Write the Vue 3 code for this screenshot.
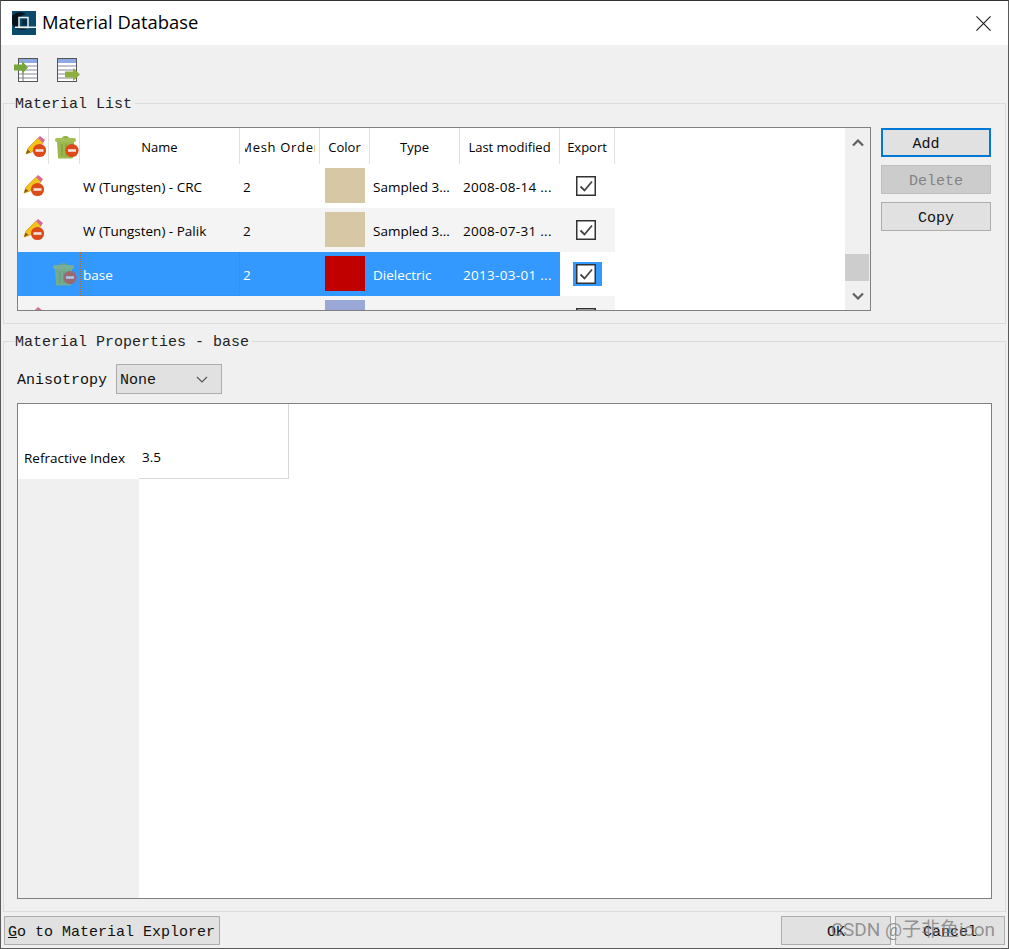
<template>
  <svg class="defs" aria-hidden="true">
    <symbol id="pencil" viewBox="0 0 22 22">
      <polygon points="1,18 3,12 13,2 18,7 7,16" fill="#f5c21a" stroke="#d99a14" stroke-width="0.7" />
      <polygon points="1,18 2.500,13.500 5.500,16" fill="#8a5a24" />
      <polygon points="13,2 15,0 20,4 18,7" fill="#d9679a" />
      <circle cx="14.5" cy="14.5" r="6.6" fill="#dc4a1a" />
      <rect x="10.5" y="13.2" width="8" height="2.6" fill="#f2e4dc" />
    </symbol>
    <symbol id="trash" viewBox="0 0 24 24">
      <ellipse cx="10.5" cy="3.5" rx="3.5" ry="2.5" fill="#8eab3e" />
      <rect x="0" y="3" width="21" height="4" rx="2" fill="#a4bf55" />
      <path d="M2 7H19L18 22.500Q18 23.500 17 23.500H4Q3 23.500 3 22.500Z" fill="#9cb84c" />
      <path d="M7 9V21M11 9V21" stroke="#86a23a" stroke-width="1.500" />
      <circle cx="17" cy="15.500" r="6.600" fill="#dc4a1a" />
      <rect x="13" y="14.200" width="8" height="2.600" fill="#f2e4dc" />
    </symbol>
  </svg>

  <div class="window">
    <header class="titlebar">
      <svg class="logo" viewBox="0 0 24 24" width="24" height="24">
        <rect width="24" height="24" fill="#0b4a6a" />
        <path d="M0 5C3 1 9 0 14 3C10 4 7 6 7 11C7 15 10 17 16 18C9 20 3 18 0 13Z" fill="#06141c" />
        <rect x="7" y="6.500" width="9" height="10" fill="#0b4a6a" stroke="#e8eef2" stroke-width="1.500" />
        <rect x="10" y="8.500" width="5" height="6" fill="#062c42" />
        <rect x="3" y="15.500" width="21" height="1.500" fill="#e8eef2" />
      </svg>
      <span class="title">Material Database</span>
      <svg class="close" viewBox="0 0 16 16" width="15" height="15">
        <path d="M0.500 0.500L15.500 15.500M15.500 0.500L0.500 15.500" stroke="#111" stroke-width="1.100" fill="none" />
      </svg>
    </header>

    <div class="toolbar">
      <svg viewBox="0 0 26 26" width="26" height="26">
        <rect x="4.500" y="0.500" width="19" height="23" fill="#fff" stroke="#555" />
        <rect x="5" y="1" width="18" height="4" fill="#8ea8e0" />
        <path d="M5 8H23M5 12H23M5 16H23M5 20H23" stroke="#c2c4cc" stroke-width="2" />
        <path d="M9 6V23" stroke="#777" />
        <path d="M0 6.500H8V3L14 9.500L8 16V12.500H0Z" fill="#76a53c" />
      </svg>
      <svg viewBox="0 0 26 26" width="26" height="26">
        <rect x="0.500" y="0.500" width="19" height="23" fill="#fff" stroke="#555" />
        <rect x="1" y="1" width="18" height="4" fill="#8ea8e0" />
        <path d="M1 8H19M1 12H19M1 16H19M1 20H19" stroke="#c2c4cc" stroke-width="2" />
        <path d="M8 13.500H16V10L23 16.500L16 23V19.500H8Z" fill="#8eaf3c" />
      </svg>
    </div>

    <fieldset class="group list-group">
      <legend>Material List</legend>
      <div class="list-body">
        <div class="mat-table">
          <div class="rows">
            <div class="row head">
              <div class="cell center"><svg class="ico head-pencil"><use href="#pencil" /></svg></div>
              <div class="cell center"><svg class="ico-t head-trash"><use href="#trash" /></svg></div>
              <div class="cell center">Name</div>
              <div class="cell center"><span class="clip"><span>Mesh Order</span></span></div>
              <div class="cell center">Color</div>
              <div class="cell center">Type</div>
              <div class="cell center">Last modified</div>
              <div class="cell center">Export</div>
            </div>
            <div
              v-for="(m, i) in materials"
              :key="i"
              class="row"
              :class="{ alt: m.alt, selected: m.selected }"
            >
              <div class="cell center tint"><svg v-if="m.readonly" class="ico"><use href="#pencil" /></svg></div>
              <div class="cell center tint"><svg v-if="!m.readonly" class="ico-t faded"><use href="#trash" /></svg></div>
              <div class="cell tint text" :class="{ focus: m.selected }">{{ m.name }}</div>
              <div class="cell tint text">{{ m.mesh }}</div>
              <div class="cell tint swatch-cell"><div class="swatch" :style="{ background: m.color }"></div></div>
              <div class="cell tint text">{{ m.type }}</div>
              <div class="cell tint text date">{{ m.date }}</div>
              <div class="cell center export">
                <div class="check-wrap">
                  <svg class="check" viewBox="0 0 20 20" width="20" height="20">
                    <rect x="0.750" y="0.750" width="18.500" height="18.500" fill="#fff" stroke="#333" stroke-width="1.500" />
                    <path d="M4.500 10.500L8.500 14.500L16 5.500" fill="none" stroke="#444" stroke-width="1.800" />
                  </svg>
                </div>
              </div>
            </div>
          </div>
          <div class="scrollbar">
            <div class="arrow up">
              <svg viewBox="0 0 12 8" width="12" height="8"><path d="M1 6.500L6 1.500L11 6.500" fill="none" stroke="#606060" stroke-width="2.200" /></svg>
            </div>
            <div class="track"><div class="thumb"></div></div>
            <div class="arrow down">
              <svg viewBox="0 0 12 8" width="12" height="8"><path d="M1 1.500L6 6.500L11 1.500" fill="none" stroke="#606060" stroke-width="2.200" /></svg>
            </div>
          </div>
        </div>
        <div class="side-btns">
          <button class="btn add">Add</button>
          <button class="btn disabled">Delete</button>
          <button class="btn">Copy</button>
        </div>
      </div>
    </fieldset>

    <fieldset class="group props-group">
      <legend>Material Properties - base</legend>
      <div class="aniso">
        <span class="mono-label">Anisotropy</span>
        <div class="combo">
          <span class="mono-label">None</span>
          <svg viewBox="0 0 12 7" width="12" height="7"><path d="M1 1L6 6L11 1" fill="none" stroke="#555" stroke-width="1.200" /></svg>
        </div>
      </div>
      <div class="prop-table">
        <div class="prop-labels"><div class="prop-label">Refractive Index</div></div>
        <div class="prop-value">3.5</div>
      </div>
    </fieldset>

    <footer class="bottom">
      <button class="btn explorer"><u>G</u>o to Material Explorer</button>
      <div class="bottom-right">
        <button class="btn wide">OK</button>
        <button class="btn wide">Cancel</button>
      </div>
    </footer>
    <div class="watermark">CSDN @子非鱼icon</div>
  </div>
</template>

<script setup>
const materials = [
  { name: 'W (Tungsten) - CRC', mesh: 2, color: '#d6c8a5', type: 'Sampled 3...', date: '2008-08-14 ...', readonly: true },
  { name: 'W (Tungsten) - Palik', mesh: 2, color: '#d6c8a5', type: 'Sampled 3...', date: '2008-07-31 ...', readonly: true, alt: true },
  { name: 'base', mesh: 2, color: '#c00000', type: 'Dielectric', date: '2013-03-01 ...', selected: true },
  // only the top of this row is visible, its text is below the fold
  { name: '', mesh: '', color: '#9aa8d8', type: '', date: '', readonly: true, alt: true }
]
</script>

<style>
html, body {
  margin: 0;
  background: #f0f0f0;
}
</style>

<style scoped>
.defs {
  position: absolute;
  width: 0;
  height: 0;
}
.window {
  position: relative;
  width: 1009px;
  height: 949px;
  box-sizing: border-box;
  background: #f0f0f0;
  border: 1px solid #5a5a5a;
  border-top-color: #333;
  display: flex;
  flex-direction: column;
  font-family: "Liberation Mono", monospace;
  font-size: 15px;
  color: #111;
}

.titlebar {
  height: 44px;
  flex: none;
  background: #fff;
  display: flex;
  align-items: center;
  padding: 0 17px 0 11px;
}
.logo {
  margin-right: 6px;
}
.title {
  font-family: "Open Sans", sans-serif;
  font-size: 18.4px;
  color: #000;
  margin-top: -4px;
}
.close {
  margin-left: auto;
}

.toolbar {
  height: 48px;
  flex: none;
  box-sizing: border-box;
  display: flex;
  gap: 17px;
  padding: 13px 0 0 13px;
}

.group {
  margin: 0 2px;
  padding: 0 13px;
  min-width: 0;
  border: 1px solid #dcdcdc;
  box-sizing: border-box;
}
.group legend {
  padding: 3px 3px 0 0;
  margin-left: -2px;
  line-height: 18px;
  color: #222;
}
.list-group {
  height: 231px;
  flex: none;
}
.props-group {
  flex: 1;
  margin-top: 7px;
}

.list-body {
  display: flex;
  align-items: flex-start;
  margin-top: 13px;
}
.mat-table {
  width: 854px;
  height: 184px;
  box-sizing: border-box;
  border: 1px solid #7e8084;
  background: #fff;
  display: flex;
  font-family: "Open Sans", sans-serif;
  font-size: 13px;
  color: #000;
}
.rows {
  flex: 1;
  overflow: hidden;
}
.row {
  display: grid;
  grid-template-columns: 31px 31px 160px 80px 50px 90px 100px 55px;
  width: 597px;
  height: 44px;
}
.row.head {
  height: 36px;
}
.cell {
  min-width: 0;
  overflow: hidden;
  white-space: nowrap;
  display: flex;
  align-items: center;
  box-sizing: border-box;
}
.center {
  justify-content: center;
}
.head .cell {
  border-right: 1px solid #e0e0e0;
  padding-top: 1px;
}
.clip {
  width: 70px;
  overflow: hidden;
  display: flex;
  justify-content: center;
  margin-left: 1px;
}
.clip span {
  flex: none;
  letter-spacing: 0.7px;
}
.text {
  padding: 1px 0 0 3px;
  font-size: 13.5px;
}
.date {
  letter-spacing: 0.3px;
}
.ico {
  width: 22px;
  height: 22px;
}
.ico-t {
  width: 24px;
  height: 24px;
}
.head-pencil {
  margin: 1px 0 0 5px;
}
.head-trash {
  margin: 0 0 0 5px;
}
.alt {
  background: #f4f4f4;
}
.selected .tint {
  background: #3399ff;
  color: #fff;
}
.faded {
  opacity: 0.62;
  margin-left: 1px;
}
.focus {
  border: 1px dotted #c06a20;
  padding-left: 2px;
}
.swatch-cell {
  padding: 4px 5px 5px;
  align-items: stretch;
}
.swatch {
  flex: 1;
}
.selected .export {
  background: #fff;
}
.check-wrap {
  display: flex;
  padding: 2px 6px 2px 3px;
}
.check {
  display: block;
}
.selected .check-wrap {
  background: #3399ff;
}

.scrollbar {
  width: 25px;
  flex: none;
  background: #f0f0f0;
  display: flex;
  flex-direction: column;
}
.arrow {
  height: 29px;
  flex: none;
  display: flex;
  align-items: center;
  justify-content: center;
}
.track {
  flex: 1;
  display: flex;
  align-items: flex-end;
}
.thumb {
  width: 24px;
  height: 27px;
  background: #cdcdcd;
}

.btn {
  box-sizing: border-box;
  height: 29px;
  padding: 4px 0 0;
  border: 1px solid #adadad;
  background: #e1e1e1;
  font: inherit;
  color: #111;
}
.side-btns {
  width: 110px;
  margin-left: 10px;
  display: flex;
  flex-direction: column;
  gap: 8px;
  margin-top: 1px;
}
.add {
  border: 2px solid #0078d7;
  padding-right: 20px;
}
.disabled {
  background: #cccccc;
  border-color: #bfbfbf;
  color: #838383;
}

.aniso {
  display: flex;
  align-items: center;
  gap: 9px;
  margin-top: 12px;
}
.mono-label {
  padding-top: 2px;
}
.combo {
  width: 106px;
  height: 30px;
  box-sizing: border-box;
  border: 1px solid #adadad;
  background: #e1e1e1;
  display: flex;
  align-items: center;
  justify-content: space-between;
  padding: 0 13px 0 3px;
}
.prop-table {
  width: 975px;
  height: 496px;
  margin-top: 9px;
  box-sizing: border-box;
  border: 1px solid #7e8084;
  background: #fff;
  display: flex;
  align-items: flex-start;
  font-family: "Open Sans", sans-serif;
  font-size: 13.5px;
  color: #000;
}
.prop-labels {
  width: 121px;
  height: 100%;
  flex: none;
  background: #f0f0f0;
}
.prop-label {
  height: 75px;
  background: #fff;
  box-sizing: border-box;
  padding: 45px 0 0 6px;
}
.prop-value {
  width: 150px;
  height: 75px;
  box-sizing: border-box;
  border-right: 1px solid #d8d8d8;
  border-bottom: 1px solid #d8d8d8;
  padding: 44px 0 0 3px;
}

.bottom {
  display: flex;
  justify-content: space-between;
  padding: 4px 3px 0;
  height: 36px;
  box-sizing: border-box;
  flex: none;
}
.explorer {
  width: 216px;
  text-align: left;
  padding-left: 3px;
}
.bottom-right {
  display: flex;
  gap: 4px;
}
.wide {
  width: 110px;
}
.watermark {
  position: absolute;
  right: 13px;
  bottom: 7px;
  font-family: Roboto, "Noto Sans CJK SC", sans-serif;
  font-size: 19px;
  color: rgba(120, 120, 120, 0.75);
  pointer-events: none;
}
</style>
